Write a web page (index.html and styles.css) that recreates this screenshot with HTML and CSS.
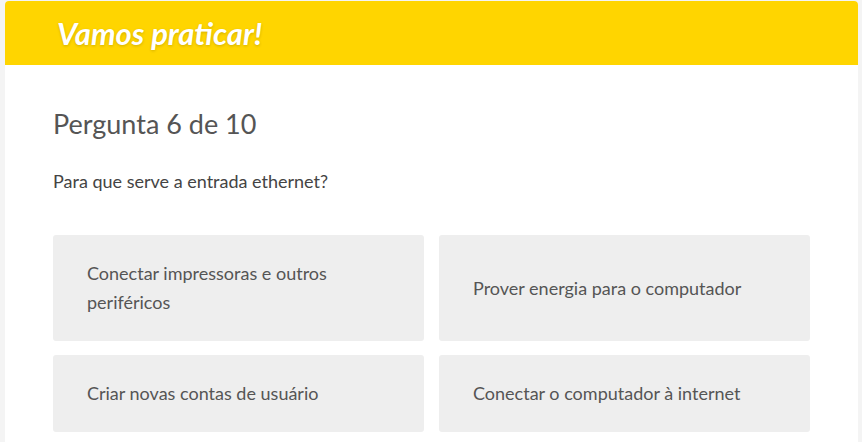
FILE: index.html
```html
<!DOCTYPE html>
<html lang="pt">
<head>
<meta charset="utf-8">
<link rel="stylesheet" href="styles.css">
</head>
<body>
<div class="card">
  <header class="card-header">
    <h1 class="title">Vamos praticar!</h1>
  </header>
  <main class="card-body">
    <h2 class="counter">Pergunta 6 de 10</h2>
    <p class="question">Para que serve a entrada ethernet?</p>
    <div class="options">
      <div class="option">Conectar impressoras e outros periféricos</div>
      <div class="option">Prover energia para o computador</div>
      <div class="option">Criar novas contas de usuário</div>
      <div class="option">Conectar o computador à internet</div>
    </div>
  </main>
</div>
</body>
</html>
```
FILE: styles.css
```css
html, body {
  margin: 0;
  padding: 0;
  background: #f4f4f4;
  height: 100%;
  overflow: hidden;
}
body {
  padding: 1px 4px 0 5px;
  box-sizing: border-box;
  font-family: "Lato", "Open Sans", sans-serif;
}
.card {
  background: #fff;
  border-radius: 4px 4px 0 0;
  min-height: 460px;
}
.card-header {
  background: #ffd500;
  height: 64px;
  border-radius: 4px 4px 0 0;
  display: flex;
  align-items: center;
  padding-left: 52px;
}
.title {
  margin: 0;
  color: #fff;
  font-size: 31px;
  font-weight: 700;
  font-style: italic;
  text-shadow: 0 1px 3px rgba(0,0,0,0.18);
}
.card-body {
  padding: 41px 47px 0 48px;
}
.counter {
  margin: 0;
  font-size: 27px;
  font-weight: 400;
  color: #555;
  line-height: 36px;
}
.question {
  margin: 28px 0 0;
  font-size: 18px;
  color: #444;
  line-height: 22px;
}
.options {
  margin-top: 43px;
  display: grid;
  grid-template-columns: 371px 371px;
  column-gap: 15px;
  row-gap: 14px;
}
.option {
  background: #eee;
  border-radius: 3px;
  padding: 24px 34px;
  font-size: 18px;
  line-height: 29px;
  color: #555;
  display: flex;
  align-items: center;
}
```
